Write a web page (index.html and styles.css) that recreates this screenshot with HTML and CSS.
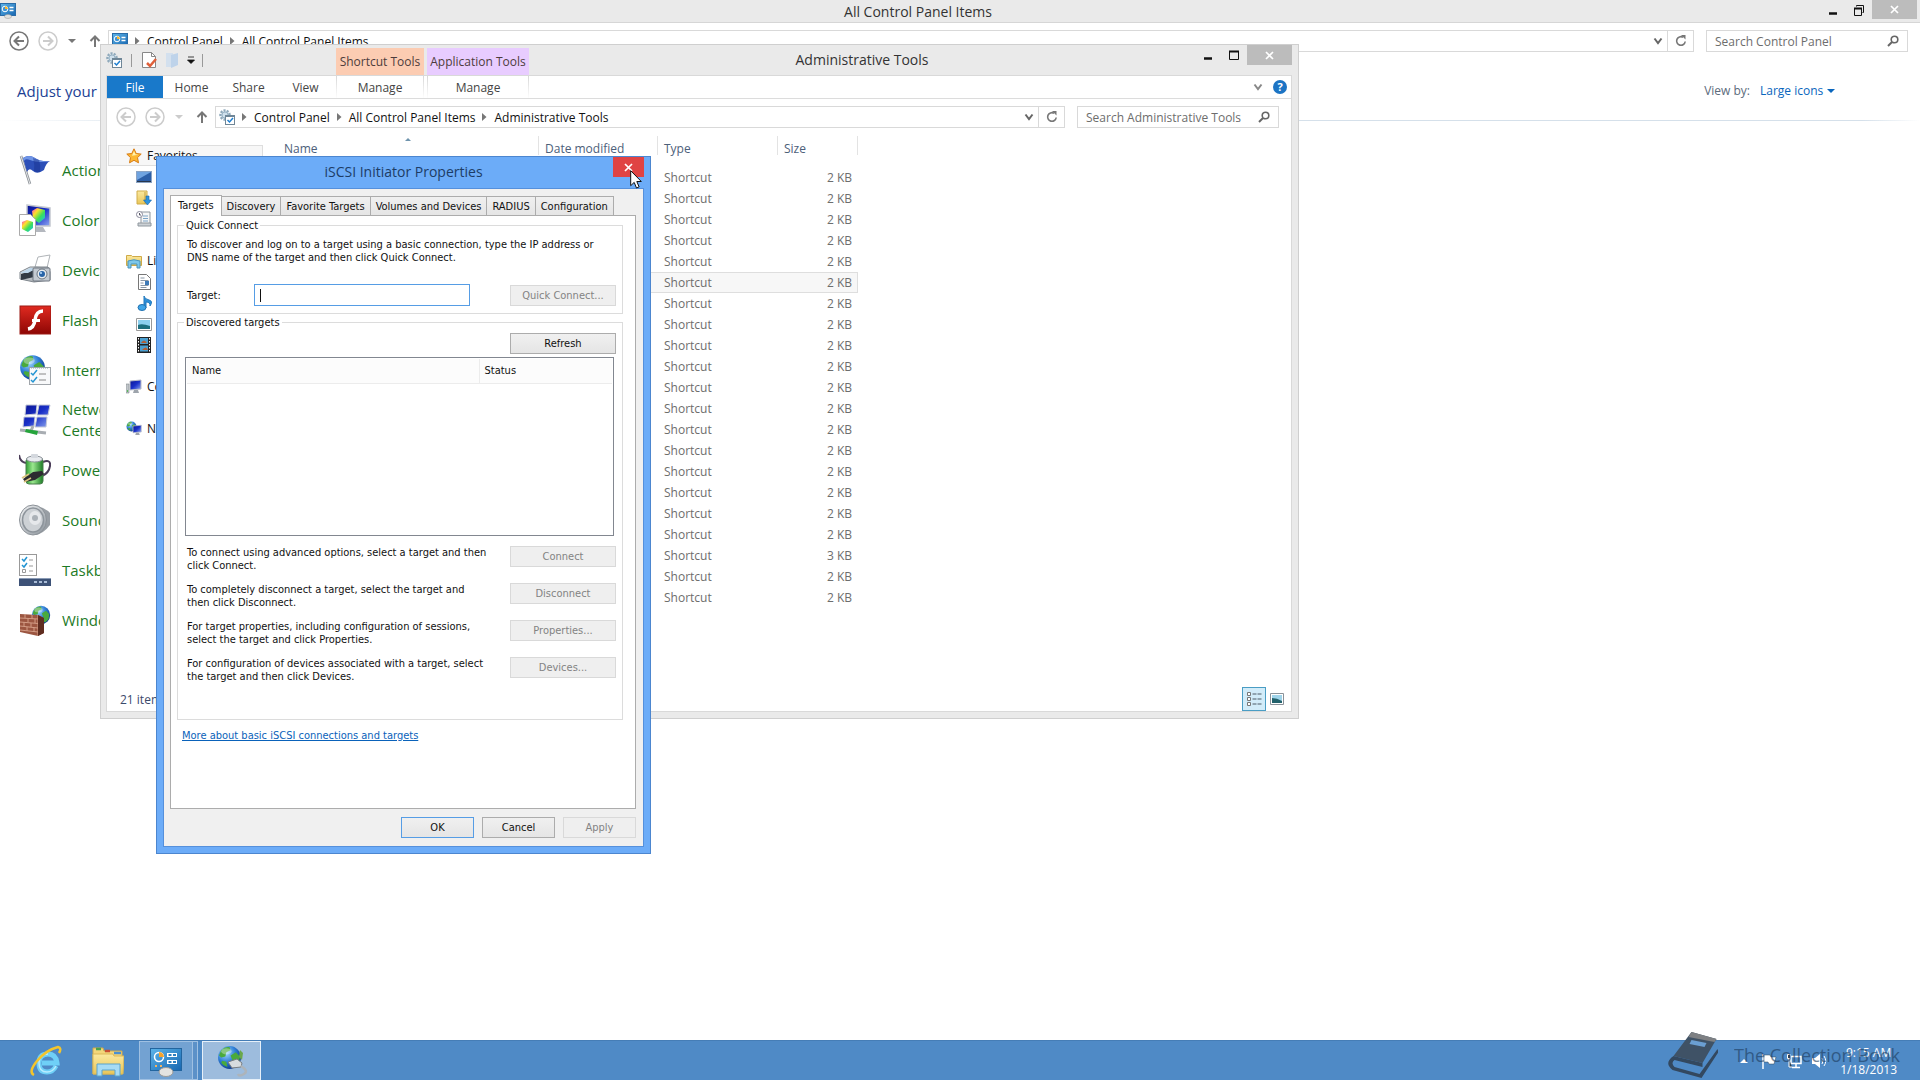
FILE: index.html
```html
<!DOCTYPE html>
<html lang="en">
<head>
    <meta charset="UTF-8">
    <meta name="viewport" content="width=device-width, initial-scale=1.0">
    <title>All Control Panel Items</title>
    <link rel="stylesheet" href="styles.css">
</head>
<body>
    <!-- shared icons -->
    <svg class="sprite" aria-hidden="true">
        <defs>
            <linearGradient id="gBlue" x1="0" y1="0" x2="1" y2="1"><stop offset="0" stop-color="#5db5ea"/><stop offset="1" stop-color="#1766b0"/></linearGradient>
            <linearGradient id="gScreen" x1="0" y1="0" x2="1" y2="1"><stop offset="0" stop-color="#0a1490"/><stop offset="0.5" stop-color="#1a30c8"/><stop offset="1" stop-color="#8fa8f0"/></linearGradient>
            <linearGradient id="gFolder" x1="0" y1="0" x2="0" y2="1"><stop offset="0" stop-color="#fbe9a0"/><stop offset="1" stop-color="#e9c658"/></linearGradient>
            <linearGradient id="gMetal" x1="0" y1="0" x2="1" y2="1"><stop offset="0" stop-color="#f4f5f6"/><stop offset="1" stop-color="#8a929a"/></linearGradient>
            <linearGradient id="gRed" x1="0" y1="0" x2="0" y2="1"><stop offset="0" stop-color="#e02a20"/><stop offset="1" stop-color="#8d0604"/></linearGradient>
            <linearGradient id="gGreen" x1="0" y1="0" x2="1" y2="0"><stop offset="0" stop-color="#2f9c33"/><stop offset="0.4" stop-color="#9be88f"/><stop offset="1" stop-color="#1c7c25"/></linearGradient>
            <linearGradient id="gRainbow" x1="0" y1="0" x2="1" y2="1"><stop offset="0" stop-color="#ff3bd0"/><stop offset="0.3" stop-color="#ffe02a"/><stop offset="0.6" stop-color="#3be05a"/><stop offset="1" stop-color="#18b8ff"/></linearGradient>
            <radialGradient id="gGlobe" cx="0.35" cy="0.3" r="0.8"><stop offset="0" stop-color="#a8dcff"/><stop offset="0.5" stop-color="#2f7fd6"/><stop offset="1" stop-color="#0b2f80"/></radialGradient>
        </defs>
        <symbol id="i-panel" viewBox="0 0 16 16">
            <rect x="0.5" y="0.5" width="15" height="12" fill="url(#gBlue)" stroke="#2a6ca8"/>
            <circle cx="5" cy="6" r="2.8" fill="#3f94d8" stroke="#fff"/><path d="M5 6V3.2A2.8 2.8 0 0 1 7.8 6z" fill="#f5b62e"/>
            <path d="M9.5 4.5h4M9.5 7.5h4" stroke="#fff" stroke-width="1.4"/>
            <ellipse cx="8" cy="13.5" rx="3.5" ry="2" fill="#e0e0de" stroke="#999" stroke-width=".5"/>
        </symbol>
        <symbol id="i-back" viewBox="0 0 22 22">
            <circle cx="11" cy="11" r="9" fill="none" stroke="currentColor" stroke-width="1.5"/>
            <path d="M16 11H7M11 6.5L6.5 11L11 15.500" fill="none" stroke="currentColor" stroke-width="2"/>
        </symbol>
        <symbol id="i-forward" viewBox="0 0 22 22">
            <circle cx="11" cy="11" r="9" fill="none" stroke="currentColor" stroke-width="1.5"/>
            <path d="M6 11h9M11 6.5l4.500 4.500L11 15.500" fill="none" stroke="currentColor" stroke-width="2"/>
        </symbol>
        <symbol id="i-down" viewBox="0 0 8 8"><path d="M0 2h8L4 6z" fill="currentColor"/></symbol>
        <symbol id="i-up" viewBox="0 0 12 12"><path d="M6 12V1.500M1.500 6L6 1.500L10.500 6" fill="none" stroke="currentColor" stroke-width="2"/></symbol>
        <symbol id="i-crumb" viewBox="0 0 5 8"><path d="M0 0v8l4.500-4z" fill="#777"/></symbol>
        <symbol id="i-chevron" viewBox="0 0 10 8"><path d="M1.500 1.500L5 6L8.500 1.500" fill="none" stroke="currentColor" stroke-width="2"/></symbol>
        <symbol id="i-refresh" viewBox="0 0 12 12"><path d="M8 2.200A4.300 4.300 0 1 0 10.200 6.500" fill="none" stroke="#777" stroke-width="1.600"/><path d="M6 0h4.500v4.500z" fill="#777"/></symbol>
        <symbol id="i-search" viewBox="0 0 12 12"><circle cx="7.500" cy="4.500" r="3.300" fill="none" stroke="#666" stroke-width="1.600"/><path d="M5 7L1 11" stroke="#666" stroke-width="2"/></symbol>
        <symbol id="i-close" viewBox="0 0 9 9"><path d="M1 1l7 7M8 1L1 8" stroke="#fff" stroke-width="1.700"/></symbol>
        <symbol id="i-min" viewBox="0 0 12 12"><path d="M2 9.500h8" stroke="#111" stroke-width="2.500"/></symbol>
        <symbol id="i-max" viewBox="0 0 12 12"><path d="M1.500 2.500h9v8h-9z" fill="none" stroke="#111"/><path d="M1 2.500h10" stroke="#111" stroke-width="2"/></symbol>
        <symbol id="i-restore" viewBox="0 0 12 12"><path d="M3.500 2.500v-1h7v7h-1M1.500 4.500h7v7h-7z" fill="none" stroke="#111"/><path d="M1 4.500h8" stroke="#111" stroke-width="2"/></symbol>
        <symbol id="i-tools" viewBox="0 0 16 16">
            <circle cx="6" cy="6" r="4.500" fill="#dce8f0" stroke="#8fa9bb" stroke-width="2.500" stroke-dasharray="2 1.200"/>
            <circle cx="6" cy="6" r="3" fill="#cfe0ec" stroke="#9ab4c6"/>
            <rect x="6.500" y="6.500" width="9" height="9" fill="#fff" stroke="#6f8697"/><path d="M6.500 7.500h9" stroke="#6f8697"/>
            <path d="M8.500 11l2 2l3.500-4" fill="none" stroke="#1f7fd0" stroke-width="1.500"/>
        </symbol>
        <symbol id="i-globe" viewBox="0 0 24 24">
            <circle cx="12" cy="12" r="11" fill="url(#gGlobe)"/>
            <path d="M4 5q4-4 8-3l1 3l-4 2l-1 4l-4 1l-2-2zM13 10l5-3l4 4l-1 6l-4 4l-3-2l1-4zM5 15l4 1l1 5q-4-1-6-4z" fill="#4aaa3c"/>
            <ellipse cx="9" cy="6" rx="5" ry="3" fill="#fff" opacity=".35"/>
        </symbol>
        <symbol id="i-monitor" viewBox="0 0 16 16">
            <path d="M4 2l11-1v9L4 11z" fill="url(#gScreen)" stroke="#b8bcc6"/><path d="M8 11h4l1 3H7z" fill="#9ea4ac"/>
        </symbol>
    </svg>

    <div class="desktop">
        <main class="panel-window">
            <header class="titlebar">
                <svg class="icon-16"><use href="#i-panel"/></svg>
                <div class="title">All Control Panel Items</div>
                <div class="caption">
                    <button aria-label="Minimize"><svg class="icon-12"><use href="#i-min"/></svg></button>
                    <button aria-label="Restore"><svg class="icon-12"><use href="#i-restore"/></svg></button>
                    <button class="close" aria-label="Close"><svg class="icon-9"><use href="#i-close"/></svg></button>
                </div>
            </header>
            <nav class="navbar">
                <div class="nav-buttons">
                    <button class="round" aria-label="Back"><svg class="icon-22"><use href="#i-back"/></svg></button>
                    <button class="round faded" aria-label="Forward"><svg class="icon-22"><use href="#i-forward"/></svg></button>
                    <button class="recent" aria-label="Recent locations"><svg class="icon-8"><use href="#i-down"/></svg></button>
                    <button class="up" aria-label="Up"><svg class="icon-12"><use href="#i-up"/></svg></button>
                </div>
                <div class="address">
                    <svg class="icon-16"><use href="#i-panel"/></svg>
                    <svg class="crumb"><use href="#i-crumb"/></svg><a href="#">Control Panel</a>
                    <svg class="crumb"><use href="#i-crumb"/></svg><a href="#">All Control Panel Items</a>
                    <button class="drop" aria-label="Previous locations"><svg class="chevron"><use href="#i-chevron"/></svg></button>
                    <button class="refresh" aria-label="Refresh"><svg class="icon-12"><use href="#i-refresh"/></svg></button>
                </div>
                <div class="search">
                    <input type="search" placeholder="Search Control Panel" aria-label="Search Control Panel">
                    <svg class="icon-12"><use href="#i-search"/></svg>
                </div>
            </nav>
            <div class="panel-head">
                <h1>Adjust your</h1>
                <div class="view-by">
                    <label for="view">View by:</label>
                    <select id="view"><option>Large icons</option></select>
                    <svg class="icon-8"><use href="#i-down"/></svg>
                </div>
            </div>
            <ul class="items">
                <li>
                    <svg class="icon-32" viewBox="0 0 32 32"><path d="M2 2l9 28" stroke="#8b9096" stroke-width="2.500"/><path d="M2 2l9 28" stroke="#e4e6e8"/><path d="M4 4q6-4 12 0t15 3q-4 2-6 9q-7 5-11 1t-6 1z" fill="#2c4fb8"/><path d="M4 4q6-4 12 0t15 3q-5 1-10 1t-10-2t-6 1z" fill="#6f95e6"/><path d="M14 4q2 7 1 13q4 2 6 1q1-6-1-12z" fill="#17328e" opacity=".5"/></svg>
                    <a href="#">Action</a>
                </li>
                <li>
                    <svg class="icon-32" viewBox="0 0 32 32"><path d="M8 1l23 3v18L8 22z" fill="url(#gScreen)" stroke="#c4c8d0" stroke-width="1.500"/><path d="M16 23h8l3 5H13z" fill="#b4b8bf"/><path d="M13 7l5-3l8 2v8l-6 5l-6-4z" fill="url(#gRainbow)"/><path d="M.5 10.500h11l5 5v16H.5z" fill="#fff" stroke="#aaa"/><path d="M3 18l5-2l6 2v6l-5 4l-6-3z" fill="url(#gRainbow)"/></svg>
                    <a href="#">Color</a>
                </li>
                <li>
                    <svg class="icon-32" viewBox="0 0 32 32"><path d="M19 3l12-2l-3 13l-12-1z" fill="#fff" stroke="#b0b4b8"/><path d="M1 18l10-5h18l2 5v8l-16 2L1 25z" fill="url(#gMetal)" stroke="#7f868d"/><path d="M2 20l13-4v7L2 26z" fill="#323a44"/><path d="M1 19l10-5h7l-9 5z" fill="#bcd5e9"/><rect x="14" y="14" width="17" height="13" rx="1" fill="#c4cad1" stroke="#6f7780"/><circle cx="23" cy="20" r="5" fill="#e8ecf0" stroke="#6c7680"/><circle cx="23" cy="20" r="3" fill="#2864a8"/><circle cx="22" cy="19" r="1" fill="#bfe2ff"/></svg>
                    <a href="#">Devices</a>
                </li>
                <li>
                    <svg class="icon-32" viewBox="0 0 32 32"><rect x="1" y="2" width="31" height="28" fill="url(#gRed)" stroke="#9c1a14"/><path d="M24 7q-7 0-8 9q-1 8-7 9" fill="none" stroke="#fff" stroke-width="3.500"/><path d="M13 16.500h8" stroke="#fff" stroke-width="3"/></svg>
                    <a href="#">Flash</a>
                </li>
                <li>
                    <svg class="icon-32" viewBox="0 0 32 32"><use href="#i-globe" width="27" height="27"/><rect x="10.500" y="13.500" width="21" height="17" fill="#f8f9fa" stroke="#a0a5aa"/><path d="M12 14h18" stroke="#8aa" stroke-dasharray="1 1"/><path d="M12 19l2 2l4-5M12 26l2 2l4-5" fill="none" stroke="#2394d2" stroke-width="1.500"/><path d="M20 20h7M20 26h7" stroke="#888"/></svg>
                    <a href="#">Internet</a>
                </li>
                <li>
                    <svg class="icon-32" viewBox="0 0 32 32"><path d="M7 1h11l-1 9l-11 1zM20 1h11l-2 10H18zM5 13h11l-1 9l-11 1zM18 13h10l-1 10H16z" fill="url(#gScreen)" stroke="#c4c9d8"/><path d="M1 26l26 3M14 22l-2 5" stroke="#a8adb2" stroke-width="3"/><path d="M7 25l12 2l-1 4L6 28z" fill="#25a43b"/></svg>
                    <a href="#">Network<br>Center</a>
                </li>
                <li>
                    <svg class="icon-32" viewBox="0 0 32 32"><path d="M0 1q1 7 7 8M24 8q8-3 7 4t-8 10" fill="none" stroke="#4b3d58" stroke-width="2"/><rect x="7" y="4" width="17" height="26" rx="3" fill="url(#gGreen)" stroke="#4b7f4d"/><ellipse cx="15.500" cy="5" rx="8" ry="3" fill="#e8ebef" stroke="#8a9097"/><rect x="12" y="0" width="7" height="4" rx="1" fill="#d4d8de"/><path d="M4 25l10-7l9-1l2 3l-9 6l-10 2z" fill="#2c2b30"/><path d="M3 24l7-4M5 28l7-4" stroke="#d9c27c" stroke-width="1.500"/></svg>
                    <a href="#">Power</a>
                </li>
                <li>
                    <svg class="icon-32" viewBox="0 0 32 32"><path d="M16 1q12 4 15 8v12q-6 8-14 10z" fill="#989ea4"/><ellipse cx="14" cy="16" rx="13.500" ry="15" fill="url(#gMetal)" stroke="#8c9298"/><ellipse cx="14" cy="16" rx="10.500" ry="12" fill="#cdd1d5" stroke="#8d949b" stroke-width="1.500"/><ellipse cx="16" cy="14" rx="6" ry="7" fill="#f1f2f3" opacity=".7"/><circle cx="16" cy="14" r="3" fill="#abb1b7"/></svg>
                    <a href="#">Sound</a>
                </li>
                <li>
                    <svg class="icon-32" viewBox="0 0 32 32"><rect x=".5" y=".5" width="17" height="21" fill="#fff" stroke="#999"/><path d="M3 5l2 2l3-4M3 11l2 2l3-4" fill="none" stroke="#2394d2" stroke-width="1.500"/><path d="M10 6h4M10 12h4M10 17h4" stroke="#999"/><path d="M3.500 15.500h3v3h-3z" fill="none" stroke="#999"/><rect y="24" width="32" height="8" fill="#3d5277"/><path d="M0 24.500h32" stroke="#8a9bb5"/><path d="M15 28h3M20 28h3M25 28h3" stroke="#a9bcd6" stroke-width="2"/></svg>
                    <a href="#">Taskbar</a>
                </li>
                <li>
                    <svg class="icon-32" viewBox="0 0 32 32"><use href="#i-globe" x="12" y="1" width="20" height="20"/><path d="M1 10l18 1l6 3v15l-6 3l-18-4z" fill="#9c5641"/><path d="M1 14l18 1M1 18l18 1.500M1 22l18 2M1 26l18 2M6 10v4M13 11v4M9 14v4M16 15v4M5 18v4M12 19v4M8 23v4M15 24v4M19 11v21" stroke="#d39c85" fill="none"/><path d="M19 11l6 3v15l-6 3z" fill="#5f2d20"/></svg>
                    <a href="#">Windows</a>
                </li>
            </ul>
        </main>

        <section class="explorer">
            <header class="titlebar">
                <div class="quick-access">
                    <svg class="icon-16"><use href="#i-tools"/></svg>
                    <i class="bar"></i>
                    <button aria-label="Properties"><svg class="icon-16" viewBox="0 0 16 16"><path d="M1.500.5h9l4 4v11h-13z" fill="#fff" stroke="#888"/><path d="M10.500.5v4h4" fill="none" stroke="#888"/><path d="M6 11l3 3l6-7" fill="none" stroke="#e0603a" stroke-width="2.500"/></svg></button>
                    <button aria-label="New folder"><svg class="icon-16" viewBox="0 0 16 16"><path d="M2 1h7v14H2z" fill="#d3e0ee"/><path d="M7 3l7-2v12l-7 3z" fill="#bed3ea"/></svg></button>
                    <button aria-label="Customize"><svg class="icon-8" viewBox="0 0 8 8"><path d="M1 1h6M0.500 4h7L4 7.500z" stroke="#111" fill="#111" stroke-width=".8"/></svg></button>
                    <i class="bar"></i>
                </div>
                <div class="context orange">Shortcut Tools</div>
                <div class="context purple">Application Tools</div>
                <div class="title">Administrative Tools</div>
                <div class="caption">
                    <button aria-label="Minimize"><svg class="icon-12"><use href="#i-min"/></svg></button>
                    <button aria-label="Maximize"><svg class="icon-12"><use href="#i-max"/></svg></button>
                    <button class="close" aria-label="Close"><svg class="icon-9"><use href="#i-close"/></svg></button>
                </div>
            </header>
            <div class="explorer-body">
                <div class="ribbon">
                    <button class="file">File</button>
                    <button>Home</button>
                    <button>Share</button>
                    <button>View</button>
                    <button class="manage shortcut">Manage</button>
                    <button class="manage application">Manage</button>
                    <div class="ribbon-end">
                        <button aria-label="Expand the ribbon"><svg class="chevron"><use href="#i-chevron"/></svg></button>
                        <button class="help" aria-label="Help">?</button>
                    </div>
                </div>
                <nav class="navbar">
                    <div class="nav-buttons">
                        <button class="round faded" aria-label="Back"><svg class="icon-22"><use href="#i-back"/></svg></button>
                        <button class="round faded" aria-label="Forward"><svg class="icon-22"><use href="#i-forward"/></svg></button>
                        <button class="recent faded" aria-label="Recent locations"><svg class="icon-8"><use href="#i-down"/></svg></button>
                        <button class="up" aria-label="Up"><svg class="icon-12"><use href="#i-up"/></svg></button>
                    </div>
                    <div class="address">
                        <svg class="icon-16"><use href="#i-tools"/></svg>
                        <svg class="crumb"><use href="#i-crumb"/></svg><a href="#">Control Panel</a>
                        <svg class="crumb"><use href="#i-crumb"/></svg><a href="#">All Control Panel Items</a>
                        <svg class="crumb"><use href="#i-crumb"/></svg><a href="#">Administrative Tools</a>
                        <button class="drop" aria-label="Previous locations"><svg class="chevron"><use href="#i-chevron"/></svg></button>
                        <button class="refresh" aria-label="Refresh"><svg class="icon-12"><use href="#i-refresh"/></svg></button>
                    </div>
                    <div class="search">
                        <input type="search" placeholder="Search Administrative Tools" aria-label="Search Administrative Tools">
                        <svg class="icon-12"><use href="#i-search"/></svg>
                    </div>
                </nav>
                <div class="browse">
                    <ul class="tree">
                        <li class="root selected"><svg class="icon-16" viewBox="0 0 16 16"><path d="M8 .8l2.200 4.700l5 .6l-3.700 3.500l1 5.200L8 12.300l-4.500 2.500l1-5.200L.8 6.100l5-.6z" fill="#fdb833" stroke="#d87c14"/><path d="M8 3l1.400 3.200l3 .5l-6.400 1z" fill="#fff3b0"/></svg>Favorites</li>
                        <li><svg class="icon-16" viewBox="0 0 16 16"><rect x=".5" y="2.500" width="15" height="11" fill="#2c5fa8" stroke="#8aa3c4"/><path d="M1 3h14L1 11z" fill="#6fa3e0"/><path d="M1 12.500h14" stroke="#27364d"/></svg></li>
                        <li><svg class="icon-16" viewBox="0 0 16 16"><path d="M1 1h10v13H1z" fill="url(#gFolder)" stroke="#d0ac4a"/><path d="M9 2v12" stroke="#c39f3e"/><path d="M10 6h3v4h2.500L11.500 15L7.500 10H10z" fill="#2f93dc" stroke="#1a68ac" stroke-width=".6"/></svg></li>
                        <li><svg class="icon-16" viewBox="0 0 16 16"><path d="M5 1h9v12H5z" fill="#f4f5f6" stroke="#8f979e"/><path d="M7 5h5M7 7.500h5M7 10h5" stroke="#7aa3c6"/><path d="M2 12h13v3H2z" fill="#ccd1d5" stroke="#8f979e"/><circle cx="3.500" cy="3.500" r="3" fill="#fff" stroke="#889"/><path d="M3.500 2v2h1.500" fill="none" stroke="#556"/></svg></li>
                        <li class="blank"></li>
                        <li class="root"><svg class="icon-16" viewBox="0 0 16 16"><path d="M.5 2.500h5l1 1h9v9H.5z" fill="url(#gFolder)" stroke="#cfaa48"/><path d="M2 15V8q6-2.500 12 0v7h-3v-4H5v4z" fill="#7cc7ea" stroke="#4a95bd"/></svg>Libraries</li>
                        <li><svg class="icon-16" viewBox="0 0 16 16"><path d="M2.500.5h8l4 4v11h-12z" fill="#fff" stroke="#777"/><path d="M4.500 4h4M4.500 6.500h8M4.500 9h3M4.500 11.500h8M4.500 13.500h6" stroke="#8896a5"/><path d="M9 7h4v4H9z" fill="#3d7ab8"/></svg></li>
                        <li><svg class="icon-16" viewBox="0 0 16 16"><path d="M8 13V1q.5 3 5 4t1 6q.5-4-4-4v6" fill="#2d8fd8" stroke="#2279bd"/><ellipse cx="6" cy="12.500" rx="4" ry="3" fill="#3fa5e8" stroke="#1e70b0"/></svg></li>
                        <li><svg class="icon-16" viewBox="0 0 16 16"><path d="M.5 2.500h15v12H.5z" fill="#fff" stroke="#999"/><path d="M2 4h12v9H2z" fill="#8dd0ef"/><path d="M2 9q4-2 12 1v3H2z" fill="#1d6f7e"/></svg></li>
                        <li><svg class="icon-16" viewBox="0 0 16 16"><path d="M1 0h14v16H1z" fill="#222"/><path d="M4 1h8v6H4zM4 8.500h8v6H4z" fill="#4b9fd0"/><path d="M5 6q3-5 6 0zM6 13q4-5 6 0z" fill="#b45f34"/><path d="M2.500 1v15M13.500 1v15" stroke="#fff" stroke-dasharray="1.500 1.500"/></svg></li>
                        <li class="blank"></li>
                        <li class="root"><svg class="icon-16" viewBox="0 0 16 16"><use href="#i-monitor" width="16" height="16"/><path d="M0 5h3v9H0z" fill="#c1c6ca" stroke="#84898e" stroke-width=".6"/><path d="M1 12h1" stroke="#3b3" stroke-width="1.500"/></svg>Computer</li>
                        <li class="blank"></li>
                        <li class="root"><svg class="icon-16" viewBox="0 0 16 16"><use href="#i-globe" width="11" height="11"/><use href="#i-monitor" x="4" y="3" width="12" height="13"/></svg>Network</li>
                    </ul>
                    <table class="files">
                        <colgroup><col class="c-name"><col class="c-date"><col class="c-type"><col class="c-size"></colgroup>
                        <thead>
                            <tr><th class="sorted">Name</th><th>Date modified</th><th>Type</th><th>Size</th></tr>
                        </thead>
                        <tbody>
                            <tr><td></td><td></td><td>Shortcut</td><td>2 KB</td></tr>
                            <tr><td></td><td></td><td>Shortcut</td><td>2 KB</td></tr>
                            <tr><td></td><td></td><td>Shortcut</td><td>2 KB</td></tr>
                            <tr><td></td><td></td><td>Shortcut</td><td>2 KB</td></tr>
                            <tr><td></td><td></td><td>Shortcut</td><td>2 KB</td></tr>
                            <tr class="selected"><td></td><td></td><td>Shortcut</td><td>2 KB</td></tr>
                            <tr><td></td><td></td><td>Shortcut</td><td>2 KB</td></tr>
                            <tr><td></td><td></td><td>Shortcut</td><td>2 KB</td></tr>
                            <tr><td></td><td></td><td>Shortcut</td><td>2 KB</td></tr>
                            <tr><td></td><td></td><td>Shortcut</td><td>2 KB</td></tr>
                            <tr><td></td><td></td><td>Shortcut</td><td>2 KB</td></tr>
                            <tr><td></td><td></td><td>Shortcut</td><td>2 KB</td></tr>
                            <tr><td></td><td></td><td>Shortcut</td><td>2 KB</td></tr>
                            <tr><td></td><td></td><td>Shortcut</td><td>2 KB</td></tr>
                            <tr><td></td><td></td><td>Shortcut</td><td>2 KB</td></tr>
                            <tr><td></td><td></td><td>Shortcut</td><td>2 KB</td></tr>
                            <tr><td></td><td></td><td>Shortcut</td><td>2 KB</td></tr>
                            <tr><td></td><td></td><td>Shortcut</td><td>2 KB</td></tr>
                            <tr><td></td><td></td><td>Shortcut</td><td>3 KB</td></tr>
                            <tr><td></td><td></td><td>Shortcut</td><td>2 KB</td></tr>
                            <tr><td></td><td></td><td>Shortcut</td><td>2 KB</td></tr>
                        </tbody>
                    </table>
                </div>
                <footer class="status">
                    <span>21 items</span>
                    <div class="views">
                        <button class="active" aria-label="Details view"><svg class="icon-16" viewBox="0 0 16 16"><path d="M1.500 1.500h3v3h-3zM1.500 6.500h3v3h-3zM1.500 11.500h3v3h-3z" fill="#fff" stroke="#777"/><path d="M6.500 3h4M11.500 3h4M6.500 8h4M11.500 8h4M6.500 13h4M11.500 13h4" stroke="#4c5a66"/></svg></button>
                        <button aria-label="Large icons view"><svg class="icon-16" viewBox="0 0 16 16"><path d="M1.500 2.500h13v11h-13z" fill="#fff" stroke="#8a9299"/><path d="M3 4h10v8H3z" fill="#9fd4ea"/><path d="M3 7q5 0 10 3v2H3z" fill="#23626c"/></svg></button>
                    </div>
                </footer>
            </div>
        </section>

        <section class="dialog" role="dialog" aria-labelledby="dialog-title">
            <header class="dialog-title">
                <h2 id="dialog-title">iSCSI Initiator Properties</h2>
                <button class="dialog-close" aria-label="Close"><svg class="icon-9"><use href="#i-close"/></svg></button>
            </header>
            <form class="dialog-body">
                <div class="tabs" role="tablist">
                    <button type="button" role="tab" class="tab active">Targets</button>
                    <button type="button" role="tab" class="tab">Discovery</button>
                    <button type="button" role="tab" class="tab">Favorite Targets</button>
                    <button type="button" role="tab" class="tab">Volumes and Devices</button>
                    <button type="button" role="tab" class="tab">RADIUS</button>
                    <button type="button" role="tab" class="tab">Configuration</button>
                </div>
                <div class="tab-page">
                    <fieldset class="quick">
                        <legend>Quick Connect</legend>
                        <p>To discover and log on to a target using a basic connection, type the IP address or<br>DNS name of the target and then click Quick Connect.</p>
                        <div class="target-row">
                            <label for="target">Target:</label>
                            <div class="target-box"><i class="caret"></i><input type="text" id="target"></div>
                            <button type="button" class="btn" disabled>Quick Connect...</button>
                        </div>
                    </fieldset>
                    <fieldset class="discovered">
                        <legend>Discovered targets</legend>
                        <button type="button" class="btn refresh-btn">Refresh</button>
                        <div class="target-list">
                            <table>
                                <thead><tr><th>Name</th><th class="state">Status</th></tr></thead>
                            </table>
                        </div>
                        <div class="actions">
                            <div class="action"><p>To connect using advanced options, select a target and then<br>click Connect.</p><button type="button" class="btn" disabled>Connect</button></div>
                            <div class="action"><p>To completely disconnect a target, select the target and<br>then click Disconnect.</p><button type="button" class="btn" disabled>Disconnect</button></div>
                            <div class="action"><p>For target properties, including configuration of sessions,<br>select the target and click Properties.</p><button type="button" class="btn" disabled>Properties...</button></div>
                            <div class="action"><p>For configuration of devices associated with a target, select<br>the target and then click Devices.</p><button type="button" class="btn" disabled>Devices...</button></div>
                        </div>
                    </fieldset>
                    <a class="more" href="#">More about basic iSCSI connections and targets</a>
                </div>
                <div class="dialog-buttons">
                    <button type="button" class="btn default">OK</button>
                    <button type="button" class="btn">Cancel</button>
                    <button type="button" class="btn" disabled>Apply</button>
                </div>
            </form>
        </section>

        <svg class="cursor" viewBox="0 0 12 19"><path d="M.7.700v15l3.500-3.300l2.300 5.600l2.600-1.100l-2.300-5.400h4.500z" fill="#fff" stroke="#111"/></svg>

        <footer class="taskbar">
            <div class="tasks">
                <button class="task" aria-label="Internet Explorer">
                    <svg class="icon-32" viewBox="0 0 32 32"><path d="M26 21q-3 6-9 6q-8 0-8-9t9-9q8 0 9 9H12" fill="none" stroke="#6fd0f7" stroke-width="5"/><path d="M26 21q-3 6-9 6q-8 0-8-9t9-9" fill="none" stroke="#b8ecff" stroke-width="1.500"/><path d="M4 30q-6-3 3-14T28 2q4 1 1 6" fill="none" stroke="#f4c52c" stroke-width="2.500"/></svg>
                </button>
                <button class="task" aria-label="File Explorer">
                    <svg class="icon-32" viewBox="0 0 32 32"><path d="M1 3h10l1 3h18v23H1z" fill="#f3d67a" stroke="#d0a94a"/><path d="M4 4h5" stroke-width="2.500" stroke="#49a34b"/><path d="M13 6h5" stroke="#c94f35" stroke-width="2.500"/><path d="M22 8h7" stroke="#4a90d0" stroke-width="2.500"/><path d="M1 9h20l1 2h10l-1 18H1z" fill="url(#gFolder)" stroke="#dcb957"/><path d="M5 31V19h23v12h-5v-6H10v6z" fill="#a6dbf5" stroke="#5ba4cd"/></svg>
                </button>
                <button class="task open stacked" aria-label="Control Panel">
                    <svg class="icon-32" viewBox="0 0 32 32"><rect x=".5" y="3.500" width="31" height="22" fill="url(#gBlue)" stroke="#22659f"/><circle cx="9" cy="12" r="4.500" fill="none" stroke="#fff" stroke-width="1.500"/><path d="M9 12V7A5 5 0 0 1 14 12z" fill="#f5a32e"/><path d="M17 10h10M17 17h10" stroke="#fff" stroke-width="4"/><path d="M18.500 10h3M23 10h3M18.500 17h3M23 17h3" stroke="#2d7fc0" stroke-width="2"/><path d="M5 21h2M10 21h2" stroke="#f5b45e" stroke-width="2"/><ellipse cx="16" cy="27" rx="7" ry="4.500" fill="#e3e3e1" stroke="#9a9a98"/></svg>
                </button>
                <button class="task open current" aria-label="iSCSI Initiator Properties">
                    <svg class="icon-32" viewBox="0 0 32 32"><use href="#i-globe" x="1" width="25" height="25"/><path d="M23 12l1-7l3 3l-1 7z" fill="#6aa84a"/><path d="M12 17l9-3l5 4l-1 4l-9 1z" fill="#d8dcdf" stroke="#777d83"/><path d="M25 21q8 5 3 8t-6 0" fill="none" stroke="#adb4ba" stroke-width="2.500"/></svg>
                </button>
            </div>
            <div class="tray">
                <svg class="icon-8 show-hidden" viewBox="0 0 8 8"><path d="M0 6h8L4 2z" fill="#fff"/></svg>
                <svg class="icon-16" viewBox="0 0 16 16"><path d="M2 1v15" stroke="#fff" stroke-width="1.500"/><path d="M3 2h6l1 2h5l-2 7H8L7 9H3z" fill="#fff" stroke="#345" stroke-width=".5"/></svg>
                <svg class="icon-16" viewBox="0 0 16 16"><path d="M5 3.500h10v7H5zM10 11v3M6 14.500h8" fill="none" stroke="#fff" stroke-width="1.500"/><path d="M1.500 1.500h3v4h-3zM3 6v8h3" fill="#345" stroke="#fff"/></svg>
                <svg class="icon-16" viewBox="0 0 16 16"><path d="M1 5h3l5-4v14l-5-4H1z" fill="#fff"/><path d="M11 5q2 3 0 6M13 3q3.500 5 0 10" fill="none" stroke="#fff"/></svg>
                <div class="clock"><span>9:15 AM</span><span>1/18/2013</span></div>
            </div>
            <div class="brand">
                <svg class="book" viewBox="0 0 50 46"><path d="M24 0L49 7L35 31L6 24z" fill="#3f5266"/><path d="M24 0L49 7L47 10L21 5z" fill="#7e8083"/><path d="M24 8l15 3l-2 4l-15-3z" fill="#6b9fd2"/><path d="M6 24l29 7v4L7 28q-4 3 0 7l25 7L50 17l1 3L34 46L5 38Q-4 31 6 24z" fill="#33485f"/></svg>
                <span>The Collection Book</span>
            </div>
        </footer>
    </div>
</body>
</html>
```

FILE: styles.css
```css
* {
    box-sizing: border-box;
}

body {
    margin: 0;
    font-family: "Open Sans", "Noto Sans", sans-serif;
    font-size: 12px;
    color: #111;
    background-color: #fff;
}

button {
    margin: 0;
    padding: 0;
    border: none;
    background: none;
    font: inherit;
    color: inherit;
}

a {
    color: inherit;
    text-decoration: none;
}

ul {
    list-style: none;
    margin: 0;
    padding: 0;
}

svg {
    display: block;
    flex-shrink: 0;
}

.sprite {
    position: absolute;
    width: 0;
    height: 0;
}

.icon-8 { width: 8px; height: 8px; }
.icon-9 { width: 9px; height: 9px; }
.icon-12 { width: 12px; height: 12px; }
.icon-16 { width: 16px; height: 16px; }
.icon-22 { width: 22px; height: 22px; }
.icon-32 { width: 32px; height: 32px; }
.chevron { width: 10px; height: 8px; }
.crumb { width: 5px; height: 8px; }

.desktop {
    position: relative;
    display: flex;
    flex-direction: column;
    min-height: 100vh;
    overflow: hidden;
}

.panel-window {
    flex: 1;
}

/* title bars */
.titlebar {
    display: flex;
    align-items: center;
    background-color: #eaeaea;
}

.panel-window .titlebar {
    height: 23px;
    border-bottom: 1px solid #d6d6d6;
}

.title {
    flex: 1;
    text-align: center;
    font-size: 14px;
    color: #333;
}

.caption {
    display: flex;
    align-self: flex-start;
}

.caption button {
    display: flex;
    align-items: center;
    justify-content: center;
    width: 26px;
    height: 19px;
}

.caption .close {
    width: 45px;
    background-color: #bcbcbc;
}

.panel-window .caption {
    margin-right: 3px;
}

/* address row */
.navbar {
    display: flex;
    align-items: center;
    height: 37px;
    padding-bottom: 1px;
    font-size: 12px;
}

.nav-buttons {
    display: flex;
    align-items: center;
    gap: 7px;
    padding: 0 3px 0 8px;
    color: #777;
}

.nav-buttons .faded {
    color: #ccc;
}

.nav-buttons .recent {
    padding: 0 2px;
}

.nav-buttons .up {
    padding: 0 4px;
}

.address {
    display: flex;
    flex: 1;
    align-items: center;
    gap: 7px;
    height: 22px;
    padding-left: 3px;
    border: 1px solid #d9d9d9;
}

.address .drop {
    margin-left: auto;
    color: #666;
}

.address .refresh {
    display: flex;
    align-items: center;
    justify-content: center;
    width: 26px;
    height: 20px;
    margin-left: -3px;
    border-left: 1px solid #d9d9d9;
}

.search {
    display: flex;
    align-items: center;
    width: 202px;
    height: 22px;
    margin: 0 12px;
    padding: 0 8px;
    border: 1px solid #d9d9d9;
}

.search input {
    flex: 1;
    min-width: 0;
    padding: 0;
    border: none;
    outline: none;
    background: none;
    font: inherit;
}

.search input::placeholder {
    color: #6d6d6d;
}

/* control panel */
.panel-head {
    display: flex;
    align-items: center;
    justify-content: space-between;
    height: 61px;
    padding: 0 85px 0 17px;
    background: linear-gradient(90deg, #fff, #d5e0ea 10%, #d5e0ea 97%, #fff) bottom / 100% 1px no-repeat;
}

.panel-head h1 {
    margin: 0;
    font-size: 15px;
    font-weight: normal;
    color: #1c3f94;
}

.view-by {
    display: flex;
    align-items: center;
    color: #5b6b7c;
}

.view-by select {
    margin-left: 10px;
    padding: 0;
    border: none;
    appearance: none;
    background: none;
    font: inherit;
    color: #0a66bd;
}

.view-by svg {
    margin-left: 3px;
    color: #0a66bd;
}

.items {
    padding: 24px 0 0 19px;
}

.items li {
    display: flex;
    align-items: center;
    gap: 11px;
    height: 50px;
    font-size: 15px;
    line-height: 21px;
    color: #1d7a26;
}

/* administrative tools window */
.explorer {
    position: absolute;
    left: 100px;
    top: 44px;
    width: 1199px;
    padding: 0 6px 6px 5px;
    border: 1px solid #cfcfcf;
    background-color: #eaeaea;
}

.explorer .titlebar {
    height: 30px;
    align-items: flex-end;
}

.explorer .title {
    align-self: center;
    padding-bottom: 2px;
}

.quick-access {
    display: flex;
    align-items: center;
    align-self: center;
    gap: 7px;
    width: 230px;
}

.quick-access .bar {
    width: 1px;
    height: 13px;
    margin: 0 2px;
    background-color: #999;
}

.quick-access .bar:last-child {
    margin-left: 0;
}

.context {
    height: 27px;
    line-height: 27px;
    font-size: 12px;
    color: #4d3c3c;
    text-align: center;
    white-space: nowrap;
}

.orange {
    width: 88px;
    background-color: #fcccb2;
}

.purple {
    width: 102px;
    margin-left: 3px;
    background-color: #e8ccff;
}

.explorer .caption button {
    height: 20px;
}

.explorer-body {
    border: 1px solid #d9d9d9;
    background-color: #fff;
}

.ribbon {
    display: flex;
    height: 23px;
    border-bottom: 1px solid #dcdcdc;
    color: #444;
}

.ribbon > button {
    width: 57px;
}

.ribbon .file {
    width: 56px;
    background-color: #1979ca;
    color: #fff;
}

.ribbon .manage {
    width: 88px;
    border: 1px solid;
    border-image: linear-gradient(#d5d5d5, #fff) 1;
    border-width: 0 1px;
}

.ribbon .shortcut {
    margin-left: 2px;
}

.ribbon .application {
    width: 102px;
    margin-left: 3px;
}

.ribbon-end {
    display: flex;
    align-items: center;
    gap: 10px;
    margin-left: auto;
    padding-right: 4px;
    color: #888;
}

.help {
    width: 14px;
    height: 14px;
    border-radius: 50%;
    background-color: #1c74c4;
    color: #fff;
    font-size: 11px;
    font-weight: bold;
    line-height: 14px;
}

.browse {
    display: flex;
}

.tree {
    width: 155px;
    margin: 9px 9px 0 1px;
    color: #111;
}

.tree li {
    display: flex;
    align-items: center;
    gap: 5px;
    height: 21px;
    padding-left: 28px;
}

.tree .root {
    padding-left: 18px;
}

.tree .selected {
    padding-left: 17px;
    border: 1px solid #dedede;
    background-color: #f7f7f7;
}

.files {
    width: 586px;
    table-layout: fixed;
    border-collapse: collapse;
    color: #6d6d6d;
}

.c-name { width: 267px; }
.c-date { width: 119px; }
.c-type { width: 120px; }
.c-size { width: 80px; }

.files th {
    height: 31px;
    padding: 5px 0 0 6px;
    background: linear-gradient(#e3e3e3, #e3e3e3) right top / 1px 19px no-repeat;
    font-weight: normal;
    text-align: left;
    vertical-align: top;
    color: #4c607a;
    line-height: 16px;
}

.files th:first-child {
    padding-left: 12px;
}

.files .sorted::before {
    content: "";
    float: right;
    width: 6px;
    height: 3px;
    margin: -3px 128px 0 0;
    background-color: #6f94ad;
    clip-path: polygon(0 100%, 50% 0, 100% 100%);
}

.files td {
    height: 21px;
    padding: 0 0 0 6px;
    line-height: 16px;
}

.files td:last-child {
    padding-right: 6px;
    text-align: right;
}

.files .selected {
    background-color: #f7f7f7;
    outline: 1px solid #dedede;
    outline-offset: -1px;
}

.status {
    display: flex;
    align-items: center;
    justify-content: space-between;
    margin-top: 79px;
    padding-left: 13px;
    color: #3b4a6b;
}

.views {
    display: flex;
    align-items: center;
    gap: 3px;
    padding-right: 6px;
}

.views .active {
    padding: 3px;
    border: 1px solid #4a9dc4;
    background-color: #d2ecf9;
}

/* iSCSI dialog */
.dialog {
    position: absolute;
    left: 156px;
    top: 156px;
    width: 495px;
    padding: 0 6px 6px;
    border: 1px solid #4c86cf;
    background-color: #6cacf8;
    font-family: "DejaVu Sans Condensed", "DejaVu Sans", sans-serif;
    font-size: 11px;
    line-height: 13px;
}

.dialog-title {
    display: flex;
    height: 31px;
    padding-left: 31px;
    font-family: "Open Sans", "Noto Sans", sans-serif;
}

.dialog-title h2 {
    flex: 1;
    margin: 0;
    text-align: center;
    font-size: 14px;
    font-weight: normal;
    line-height: 30px;
    color: #1d3d66;
}

.dialog-close {
    display: flex;
    align-items: center;
    justify-content: center;
    width: 31px;
    height: 20px;
    background-color: #e04343;
}

.dialog-body {
    padding: 6px 7px 8px 6px;
    border: 1px solid #5590dc;
    background-color: #f0f0f0;
}

.tabs {
    display: flex;
    align-items: flex-end;
}

.tab {
    height: 19px;
    padding: 0 5px;
    border: 1px solid #acacac;
    border-left-width: 0;
    border-bottom: none;
    background: linear-gradient(#f0f0f0, #e5e5e5);
    white-space: nowrap;
}

.tab.active {
    height: 21px;
    margin-bottom: -1px;
    padding: 0 7px 2px;
    border-left-width: 1px;
    background: #fff;
    z-index: 1;
}

.tab-page {
    padding: 3px 12px 66px 6px;
    border: 1px solid #acacac;
    background-color: #fff;
}

.tab-page p {
    margin: 0;
    white-space: nowrap;
}

fieldset {
    min-width: 0;
    margin: 0;
    border: 1px solid #dcdcdc;
}

legend {
    padding: 0 2px;
}

.quick {
    padding: 6px 6px 7px 9px;
}

.quick legend {
    margin-left: -3px;
}

.target-row {
    display: flex;
    align-items: center;
    margin-top: 20px;
}

.target-row label {
    width: 67px;
}

.target-box {
    display: flex;
    align-items: center;
    width: 216px;
    height: 22px;
    padding-left: 5px;
    border: 1px solid #569de5;
    background-color: #fff;
}

.target-box input {
    flex: 1;
    min-width: 0;
    border: none;
    outline: none;
    font: inherit;
}

.caret {
    width: 1px;
    height: 13px;
    background-color: #111;
}

.btn {
    width: 106px;
    height: 21px;
    border: 1px solid #acacac;
    background: linear-gradient(#f0f0f0, #e5e5e5);
}

.btn:disabled {
    border-color: #d9d9d9;
    background: #efefef;
    color: #838383;
}

.btn.default {
    border-color: #569de5;
}

.target-row .btn {
    margin-left: auto;
}

.discovered {
    margin-top: 2px;
    padding: 4px 6px 36px 7px;
}

.discovered legend {
    margin-left: -1px;
}

.refresh-btn {
    display: block;
    margin-left: auto;
}

.target-list {
    min-height: 179px;
    margin: 3px 2px 10px 0;
    padding: 1px;
    border: 1px solid #828790;
}

.target-list table {
    width: 100%;
    border-collapse: collapse;
}

.target-list th {
    height: 24px;
    padding: 0 5px;
    border-bottom: 1px solid #ececec;
    background-color: #fcfcfc;
    font-weight: normal;
    text-align: left;
}

.target-list .state {
    width: 133px;
    border-left: 1px solid #ececec;
}

.actions {
    display: flex;
    flex-direction: column;
    gap: 11px;
    padding-left: 2px;
}

.action {
    display: flex;
    justify-content: space-between;
}

.more {
    display: inline-block;
    margin: 9px 0 0 5px;
    color: #0a62ba;
    text-decoration: underline;
}

.dialog-buttons {
    display: flex;
    justify-content: flex-end;
    gap: 8px;
    padding-top: 8px;
}

.dialog-buttons .btn {
    width: 73px;
}

.cursor {
    position: absolute;
    left: 630px;
    top: 170px;
    width: 12px;
    height: 19px;
}

/* taskbar */
.taskbar {
    position: relative;
    display: flex;
    justify-content: space-between;
    height: 40px;
    background-color: #4f8ac6;
    border-top: 1px solid #457db6;
}

.tasks {
    display: flex;
    padding-left: 15px;
}

.task {
    display: flex;
    align-items: center;
    justify-content: center;
    width: 62px;
}

.task.open {
    width: 59px;
    border: 1px solid #9fc0e2;
    background-color: #73a2d2;
}

.task.stacked {
    margin-right: 4px;
    padding-right: 5px;
    box-shadow: inset -4px 0 #5c91c8, inset -5px 0 #9fc0e2;
}

.task.current {
    border-color: #e6f0f9;
    background-color: #9dbcdd;
}

.tray {
    display: flex;
    align-items: center;
    gap: 9px;
    padding-right: 23px;
    color: #fff;
}

.show-hidden {
    margin-right: 4px;
}

.clock {
    display: flex;
    flex-direction: column;
    align-items: center;
    margin-left: 4px;
    line-height: 17px;
}

.brand {
    position: absolute;
    right: 20px;
    bottom: 2px;
    display: flex;
    align-items: center;
    gap: 16px;
    font-size: 18px;
    color: #1c3a5a;
}

.brand span {
    opacity: 0.6;
}

.book {
    width: 51px;
    height: 46px;
}
```
